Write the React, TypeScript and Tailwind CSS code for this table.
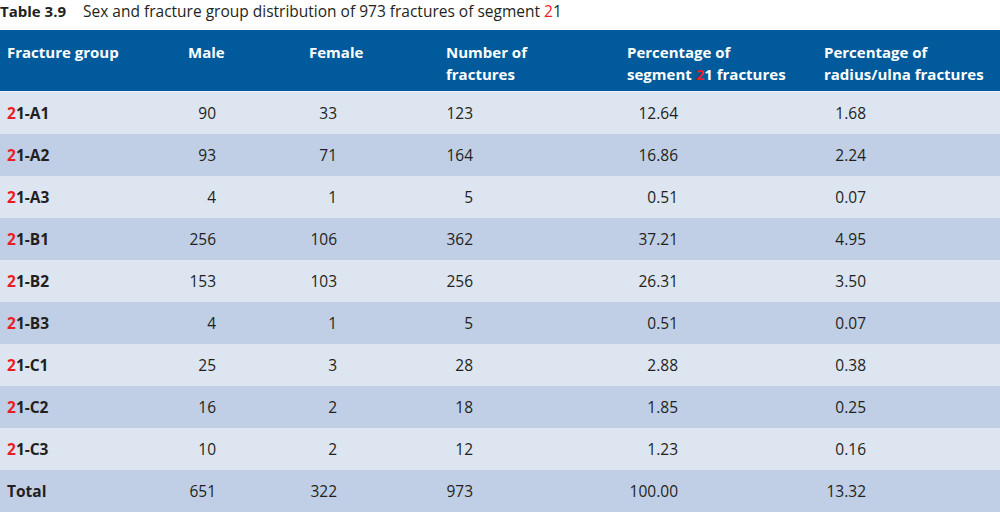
import React from 'react';

type Row = {
  group: string;
  male: string;
  female: string;
  total: string;
  pctSegment: string;
  pctRadius: string;
};

const rows: Row[] = [
  { group: '1-A1', male: '90', female: '33', total: '123', pctSegment: '12.64', pctRadius: '1.68' },
  { group: '1-A2', male: '93', female: '71', total: '164', pctSegment: '16.86', pctRadius: '2.24' },
  { group: '1-A3', male: '4', female: '1', total: '5', pctSegment: '0.51', pctRadius: '0.07' },
  { group: '1-B1', male: '256', female: '106', total: '362', pctSegment: '37.21', pctRadius: '4.95' },
  { group: '1-B2', male: '153', female: '103', total: '256', pctSegment: '26.31', pctRadius: '3.50' },
  { group: '1-B3', male: '4', female: '1', total: '5', pctSegment: '0.51', pctRadius: '0.07' },
  { group: '1-C1', male: '25', female: '3', total: '28', pctSegment: '2.88', pctRadius: '0.38' },
  { group: '1-C2', male: '16', female: '2', total: '18', pctSegment: '1.85', pctRadius: '0.25' },
  { group: '1-C3', male: '10', female: '2', total: '12', pctSegment: '1.23', pctRadius: '0.16' },
];

const grid = 'grid grid-cols-[181px_121px_137px_181px_197px_183px]';

const Num = ({ value, w }: { value: string; w: string }) => (
  <div className="pl-[7px]">
    <div className={`${w} text-right whitespace-nowrap`}>{value}</div>
  </div>
);

const App: React.FC = () => {
  return (
    <div className="w-[1000px] h-[513px] bg-white text-[#231f20] font-['Open_Sans',sans-serif] text-[15.5px] overflow-hidden">
      <div className="h-[30px] pt-[1px] leading-[20px] whitespace-nowrap">
        <span className="font-bold text-[15px]">Table 3.9</span>
        <span className="ml-[17px]">
          Sex and fracture group distribution of 973 fractures of segment <span className="text-[#ec1c24]">2</span>1
        </span>
      </div>

      <div className={`${grid} h-[62px] bg-[#005a9c] text-white font-bold text-[15px] leading-[22px] pt-[11px] border-b border-[#eef2f8]`}>
        <div className="pl-[7px]">Fracture group</div>
        <div className="pl-[7px]">Male</div>
        <div className="pl-[7px]">Female</div>
        <div className="pl-[7px]">Number of<br />fractures</div>
        <div className="pl-[7px]">Percentage of<br />segment <span className="text-[#ec1c24]">2</span>1 fractures</div>
        <div className="pl-[7px]">Percentage of<br />radius/ulna fractures</div>
      </div>

      {rows.map((r, i) => (
        <div
          key={r.group}
          className={`${grid} h-[42px] pt-[2px] items-center ${i % 2 === 0 ? 'bg-[#dde5f1]' : 'bg-[#c0cfe5]'}`}
        >
          <div className="pl-[7px] font-bold">
            <span className="text-[#ec1c24]">2</span>
            {r.group}
          </div>
          <Num value={r.male} w="w-[28px]" />
          <Num value={r.female} w="w-[28px]" />
          <Num value={r.total} w="w-[27px]" />
          <Num value={r.pctSegment} w="w-[51px]" />
          <Num value={r.pctRadius} w="w-[42px]" />
        </div>
      ))}

      <div className={`${grid} h-[42px] pt-[2px] items-center bg-[#c0cfe5]`}>
        <div className="pl-[7px] font-bold">Total</div>
        <Num value="651" w="w-[28px]" />
        <Num value="322" w="w-[28px]" />
        <Num value="973" w="w-[27px]" />
        <Num value="100.00" w="w-[51px]" />
        <Num value="13.32" w="w-[42px]" />
      </div>
    </div>
  );
};

export default App;
